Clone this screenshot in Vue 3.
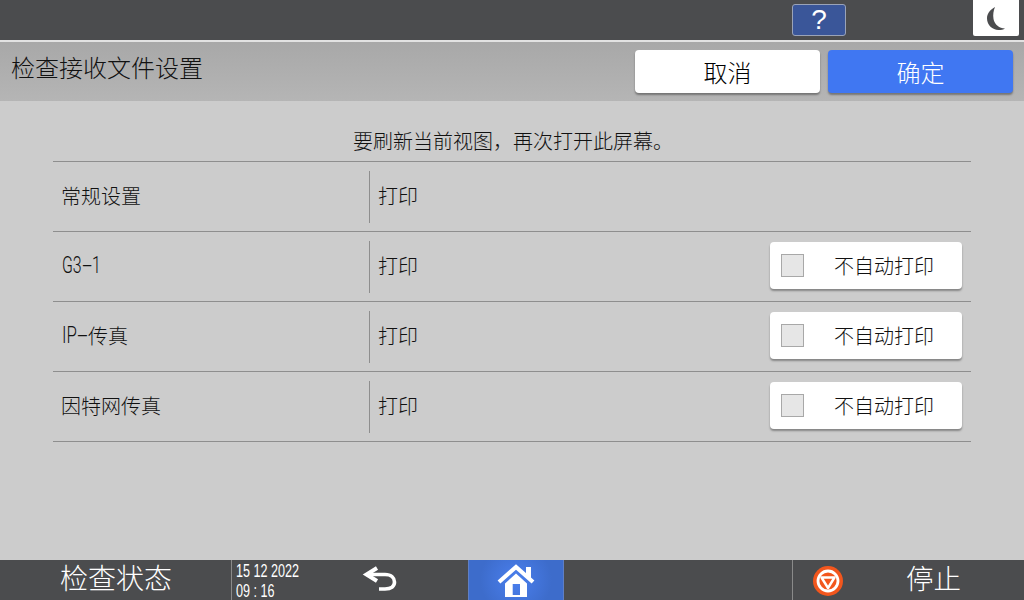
<template>
  <div class="screen">
    <div class="topbar">
      <button class="help">?</button>
      <button class="night">
        <svg width="24" height="28" viewBox="0 0 24 28">
          <path d="M11 3C5.500 6 3 10 3 14.500C3 21 8.500 26 14.500 26C17 26 19.500 25.500 21 24.500C15.500 24.500 10.500 20.500 9.500 15C8.800 10.500 9.500 6.500 11 3Z" fill="#4b4c4e" />
        </svg>
      </button>
    </div>

    <div class="header">
      <div class="title">检查接收文件设置</div>
      <button class="btn-cancel">取消</button>
      <button class="btn-ok">确定</button>
    </div>

    <div class="content">
      <div class="notice">要刷新当前视图，再次打开此屏幕。</div>
      <div class="table">
        <div v-for="row in rows" :key="row.id" class="row">
          <div class="name">
            <template v-for="part in row.parts" :key="part.text">
              <span v-if="part.sx" class="latin" :style="{ width: part.w + 'px', transform: `scaleX(${part.sx})` }">{{ part.text }}</span>
              <template v-else>{{ part.text }}</template>
            </template>
          </div>
          <div class="value">打印</div>
          <button v-if="row.toggle" class="toggle">
            <span class="check"></span>
            <span>不自动打印</span>
          </button>
        </div>
      </div>
    </div>

    <div class="footer">
      <div class="status">检查状态</div>
      <div class="clock">
        <div class="clock-line">15 12 2022</div>
        <div class="clock-line">09 : 16</div>
      </div>
      <div class="back">
        <svg width="36" height="28" viewBox="0 0 36 28">
          <path d="M15 3L4.500 9.500L15 16" fill="none" stroke="#fff" stroke-width="4" />
          <path d="M6 9.500H23C29.500 9.500 32.500 13 32.500 17C32.500 21 29.500 24 23 24H17" fill="none" stroke="#fff" stroke-width="3.600" />
        </svg>
      </div>
      <div class="home">
        <svg width="38" height="34" viewBox="0 0 38 34">
          <rect x="29" y="3" width="5" height="11" fill="#fff" />
          <path d="M2 18L19 3L36 18" fill="none" stroke="#fff" stroke-width="4.200" />
          <path d="M8 19.500L19 9.500L30 19.500V33H8ZM15.700 20V31H23V20Z" fill="#fff" fill-rule="evenodd" />
        </svg>
      </div>
      <div class="spacer"></div>
      <div class="stop">
        <svg class="stop-icon" width="32" height="32" viewBox="0 0 32 32">
          <circle cx="16" cy="16" r="15" fill="#f2561d" />
          <circle cx="16" cy="16" r="10" fill="none" stroke="#fff" stroke-width="2.800" />
          <path d="M9.500 12.500h13L16 23z" fill="none" stroke="#fff" stroke-width="2.400" stroke-linejoin="round" />
        </svg>
        <span class="stop-label">停止</span>
      </div>
    </div>
  </div>
</template>

<script setup>
const rows = [
  { id: 'general', parts: [{ text: '常规设置' }], toggle: false },
  {
    id: 'g3',
    parts: [
      { text: 'G3', sx: 0.66, w: 20 },
      { text: '-', sx: 1.5, w: 10 },
      { text: '1', sx: 0.66, w: 9 },
    ],
    toggle: true,
  },
  {
    id: 'ip',
    parts: [
      { text: 'IP', sx: 0.7, w: 15 },
      { text: '-', sx: 1.6, w: 11 },
      { text: '传真' },
    ],
    toggle: true,
  },
  { id: 'internet', parts: [{ text: '因特网传真' }], toggle: true },
];
</script>

<style>
html,
body {
  margin: 0;
  overflow: hidden;
}
</style>

<style scoped>
.screen {
  width: 1024px;
  height: 600px;
  display: flex;
  flex-direction: column;
  background: #cccccc;
  color: #111;
  font-family: "Noto Sans CJK SC", "Noto Sans", sans-serif;
  font-weight: 300;
}

button {
  font: inherit;
  color: inherit;
  padding: 0;
  border: 0;
}

.topbar {
  height: 40px;
  flex: none;
  box-sizing: border-box;
  display: flex;
  align-items: flex-start;
  background: #4b4c4e;
  padding: 4px 0 0 792px;
}

.help {
  width: 54px;
  height: 32px;
  box-sizing: border-box;
  background: #3a5699;
  border: 1px solid #9aa3b8;
  border-radius: 3px;
  color: #fff;
  font-family: "Liberation Sans", sans-serif;
  font-size: 28px;
  font-weight: 400;
  line-height: 30px;
}

.night {
  width: 46px;
  height: 36px;
  margin: -4px 0 0 127px;
  background: #fff;
  border-radius: 0 0 2px 2px;
  display: flex;
  align-items: center;
  justify-content: center;
}

.header {
  height: 61px;
  flex: none;
  box-sizing: border-box;
  display: flex;
  align-items: flex-start;
  border-top: 2px solid #e2e2e2;
  background: linear-gradient(#a8a8a8, #b5b5b5);
  padding: 8px 11px 0;
}

.title {
  flex: 1;
  font-size: 24px;
  line-height: 34px;
}

.btn-cancel,
.btn-ok {
  width: 185px;
  height: 43px;
  border-radius: 4px;
  font-size: 24px;
  line-height: 43px;
  box-shadow: 0 2px 2px rgba(0, 0, 0, 0.35);
}

.btn-cancel {
  background: #fff;
  color: #000;
}

.btn-ok {
  margin-left: 8px;
  background: #4077f2;
  color: #fff;
}

.content {
  flex: 1;
  padding: 0 53px;
}

.notice {
  height: 61px;
  box-sizing: border-box;
  padding: 26px 0 0 2px;
  text-align: center;
  font-size: 20px;
  line-height: 28px;
  border-bottom: 1px solid #8e8e8e;
}

.row {
  height: 70px;
  box-sizing: border-box;
  display: flex;
  align-items: center;
  padding-bottom: 3px;
  border-bottom: 1px solid #8e8e8e;
  font-size: 20px;
}

.name {
  width: 317px;
  height: 52px;
  margin-top: 3px;
  box-sizing: border-box;
  display: flex;
  align-items: center;
  padding: 0 0 3px 8px;
  flex: none;
  border-right: 1px solid #8e8e8e;
}

.latin {
  display: inline-block;
  flex: none;
  font-family: Roboto, sans-serif;
  font-size: 24px;
  line-height: 1;
  white-space: nowrap;
  transform-origin: left center;
}

.latin:first-child {
  margin-left: 1px;
}

.value {
  flex: 1;
  padding-left: 8px;
}

.toggle {
  width: 192px;
  height: 47px;
  margin-right: 9px;
  display: flex;
  align-items: center;
  gap: 30px;
  padding-left: 11px;
  box-sizing: border-box;
  background: #fff;
  border-radius: 4px;
  box-shadow: 0 2px 2px rgba(0, 0, 0, 0.35);
}

.check {
  width: 23px;
  height: 23px;
  box-sizing: border-box;
  background: #e6e6e6;
  border: 1px solid #a8a8a8;
}

.footer {
  height: 40px;
  flex: none;
  display: flex;
  background: #4b4c4e;
  color: #fff;
}

.status {
  width: 232px;
  box-sizing: border-box;
  padding-left: 60px;
  font-size: 28px;
  line-height: 35px;
  border-right: 1px solid #8a8a8a;
}

.clock {
  width: 130px;
  padding: 1px 0 0 4px;
  box-sizing: border-box;
  font-family: "Liberation Sans", sans-serif;
  font-size: 18px;
  line-height: 20px;
  font-weight: 400;
  white-space: nowrap;
}

.clock-line {
  transform: scaleX(0.7);
  transform-origin: left center;
}

.back {
  width: 106px;
  padding-top: 5px;
  box-sizing: border-box;
}

.home {
  width: 96px;
  flex: none;
  box-sizing: border-box;
  display: flex;
  justify-content: center;
  padding-top: 4px;
  background: radial-gradient(circle at center, #4a7fee, #3d6ccb 70%);
  border-left: 1px solid #5f7fc4;
  border-right: 1px solid #5f7fc4;
}

.spacer {
  flex: 1;
}

.stop {
  width: 232px;
  box-sizing: border-box;
  display: flex;
  align-items: flex-start;
  padding-left: 19px;
  border-left: 1px solid #8a8a8a;
}

.stop-icon {
  margin-top: 5px;
}

.stop-label {
  margin-left: 62px;
  font-size: 27.5px;
  line-height: 35px;
}
</style>
